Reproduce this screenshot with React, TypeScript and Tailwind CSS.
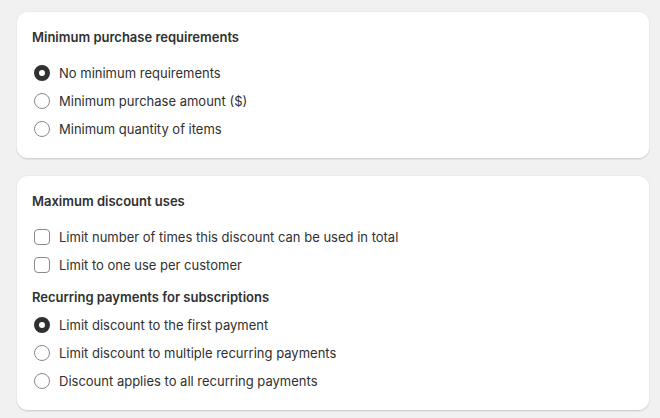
import type { ReactNode } from "react";

function Radio({ checked, label }: { checked?: boolean; label: string }) {
  return (
    <label className="flex h-7 items-center gap-[9px]">
      <span
        className={
          checked
            ? "ml-[2px] box-border h-4 w-4 shrink-0 rounded-full border-[5px] border-[#303030] bg-white"
            : "ml-[2px] box-border h-4 w-4 shrink-0 rounded-full border border-[#8a8a8a] bg-white"
        }
      />
      <span>{label}</span>
    </label>
  );
}

function Checkbox({ label }: { label: string }) {
  return (
    <label className="flex h-7 items-center gap-[9px]">
      <span className="ml-[2px] box-border h-4 w-4 shrink-0 rounded-[4px] border border-[#8a8a8a] bg-white" />
      <span>{label}</span>
    </label>
  );
}

function Card({ children }: { children: ReactNode }) {
  return (
    <section className="rounded-xl bg-white px-4 pb-4 pt-4 shadow-[0_1px_0_0_rgba(26,26,26,0.07),inset_0_-1px_0_0_#d4d4d4,inset_1px_0_0_0_#ebebeb,inset_-1px_0_0_0_#ebebeb,inset_0_1px_0_0_#ebebeb]">
      {children}
    </section>
  );
}

export default function App() {
  return (
    <div
      className="min-h-[418px] w-[660px] bg-[#f1f1f1] pl-4 pr-[10px] pt-[11px] text-[13px] leading-5 text-[#303030]"
      style={{ fontFamily: "Inter, 'Noto Sans', sans-serif" }}
    >
      <div className="flex flex-col gap-4">
        <Card>
          <h2 className="font-semibold">Minimum purchase requirements</h2>
          <div className="mt-3 flex flex-col">
            <Radio checked label="No minimum requirements" />
            <Radio label="Minimum purchase amount ($)" />
            <Radio label="Minimum quantity of items" />
          </div>
        </Card>
        <Card>
          <h2 className="font-semibold">Maximum discount uses</h2>
          <div className="mt-3 flex flex-col">
            <Checkbox label="Limit number of times this discount can be used in total" />
            <Checkbox label="Limit to one use per customer" />
          </div>
          <h3 className="mt-2 font-semibold">Recurring payments for subscriptions</h3>
          <div className="mt-1 flex flex-col">
            <Radio checked label="Limit discount to the first payment" />
            <Radio label="Limit discount to multiple recurring payments" />
            <Radio label="Discount applies to all recurring payments" />
          </div>
        </Card>
      </div>
    </div>
  );
}
